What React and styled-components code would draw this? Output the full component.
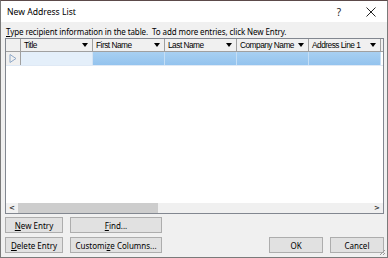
import React from "react";
import styled, { createGlobalStyle } from "styled-components";

const GlobalStyle = createGlobalStyle`
  html, body {
    margin: 0;
    padding: 0;
    background: #ffffff;
  }
  * {
    box-sizing: border-box;
  }
`;

const Window = styled.div`
  width: 388px;
  height: 258px;
  border: 1px solid #7a7a7a;
  border-top-color: #5c4a4a;
  background: #f0f0f0;
  display: flex;
  flex-direction: column;
  font-family: "Noto Sans", "Open Sans", sans-serif;
  color: #000;
  position: relative;
`;

const TitleBar = styled.div`
  height: 23px;
  background: #ffffff;
  display: flex;
  align-items: center;
  padding-left: 6px;
  font-size: 8.6px;
`;

const TitleText = styled.div`
  flex: 1;
`;

const TitleButton = styled.div`
  width: 32px;
  display: flex;
  justify-content: center;
  font-size: 10px;
  color: #222;
`;

const Body = styled.div`
  flex: 1;
  display: flex;
  flex-direction: column;
  padding: 3px 3px 4px 4px;
`;

const Hint = styled.div`
  font-size: 8px;
  height: 13px;
  line-height: 13px;
  padding-left: 1px;
  letter-spacing: -0.1px;
`;

const Key = styled.span`
  text-decoration: underline;
`;

const Grid = styled.div`
  height: 176px;
  border: 1px solid #828790;
  background: #ffffff;
  display: flex;
  flex-direction: column;
`;

const HeaderRow = styled.div`
  display: flex;
  height: 13px;
  background: #f0f0f0;
  border-bottom: 1px solid #a0a0a0;
`;

const Row = styled.div`
  display: flex;
  height: 14px;
  border-bottom: 1px solid #dfe9f5;
`;

const Selector = styled.div`
  width: 15px;
  border-right: 1px solid #a0a0a0;
  background: #f0f0f0;
  display: flex;
  align-items: center;
  justify-content: center;
`;

const HeadCell = styled.div`
  width: 72px;
  border-right: 1px solid #a0a0a0;
  display: flex;
  align-items: center;
  justify-content: space-between;
  padding: 0 4px 0 3px;
  font-family: "Liberation Sans", Arial, sans-serif;
  font-size: 8.3px;
  letter-spacing: -0.5px;
  white-space: nowrap;
  overflow: hidden;
`;

const Arrow = styled.span`
  width: 0;
  height: 0;
  margin-left: 2px;
  border-left: 3.5px solid transparent;
  border-right: 3.5px solid transparent;
  border-top: 4px solid #000;
  flex-shrink: 0;
`;

const Cell = styled.div`
  width: 72px;
  border-right: 1px solid ${(p) => (p.current ? "#d4e3f3" : "#c4def5")};
  background: ${(p) =>
    p.current ? "#e4effa" : "linear-gradient(#a8d0f2, #93c3ee)"};
`;

const Filler = styled.div`
  flex: 1;
`;

const Empty = styled.div`
  flex: 1;
`;

const HScroll = styled.div`
  height: 10px;
  background: #f0f0f0;
  display: flex;
  align-items: center;
  color: #333;
`;

const ScrollArrow = styled.div`
  width: 12px;
  text-align: center;
  line-height: 10px;
  font-family: "DejaVu Sans", sans-serif;
  font-weight: bold;
  font-size: 7px;
`;

const Thumb = styled.div`
  width: 140px;
  height: 10px;
  background: #cdcdcd;
`;

const Footer = styled.div`
  display: flex;
  justify-content: space-between;
  align-items: flex-end;
  padding-top: 3px;
`;

const ButtonGrid = styled.div`
  display: grid;
  grid-template-columns: 58px 92px;
  column-gap: 7px;
  row-gap: 4px;
`;

const Button = styled.div`
  height: 16px;
  width: ${(p) => p.w || "auto"};
  background: #e1e1e1;
  border: 1px solid #adadad;
  display: flex;
  align-items: center;
  justify-content: center;
  font-size: 8px;
  white-space: nowrap;
`;

const RightButtons = styled.div`
  display: flex;
  gap: 7px;
`;

const Grip = styled.svg`
  position: absolute;
  right: 1px;
  bottom: 1px;
`;

const columns = ["Title", "First Name", "Last Name", "Company Name", "Address Line 1"];

export default function App() {
  return (
    <>
      <GlobalStyle />
      <Window>
        <TitleBar>
          <TitleText>New Address List</TitleText>
          <TitleButton>?</TitleButton>
          <TitleButton>
            <svg width="10" height="10" viewBox="0 0 10 10">
              <path d="M0.5 0.5 L9.5 9.5 M9.5 0.5 L0.5 9.5" stroke="#222" strokeWidth="1" />
            </svg>
          </TitleButton>
        </TitleBar>
        <Body>
          <Hint>
            <Key>T</Key>ype recipient information in the table.&nbsp; To add more
            entries, click New Entry.
          </Hint>
          <Grid>
            <HeaderRow>
              <Selector />
              {columns.map((c) => (
                <HeadCell key={c}>
                  <span>{c}</span>
                  <Arrow />
                </HeadCell>
              ))}
              <Filler />
            </HeaderRow>
            <Row>
              <Selector>
                <svg width="8" height="9" viewBox="0 0 8 9">
                  <path d="M1 0.5 L7 4.5 L1 8.5 Z" fill="none" stroke="#8fa9c8" strokeWidth="1" />
                </svg>
              </Selector>
              {columns.map((c, i) => (
                <Cell key={c} current={i === 0} />
              ))}
              <Filler />
            </Row>
            <Empty />
            <HScroll>
              <ScrollArrow>&lt;</ScrollArrow>
              <Thumb />
              <Filler />
              <ScrollArrow>&gt;</ScrollArrow>
            </HScroll>
          </Grid>
          <Footer>
            <ButtonGrid>
              <Button>
                <Key>N</Key>ew Entry
              </Button>
              <Button>
                <Key>F</Key>ind...
              </Button>
              <Button>
                <Key>D</Key>elete Entry
              </Button>
              <Button>
                Customi<Key>z</Key>e Columns...
              </Button>
            </ButtonGrid>
            <RightButtons>
              <Button w="54px">OK</Button>
              <Button w="54px">Cancel</Button>
            </RightButtons>
          </Footer>
          <Grip width="8" height="8" viewBox="0 0 8 8">
            <path d="M7 2 L2 7 M7 5 L5 7" stroke="#9a9a9a" strokeWidth="1" />
          </Grip>
        </Body>
      </Window>
    </>
  );
}
